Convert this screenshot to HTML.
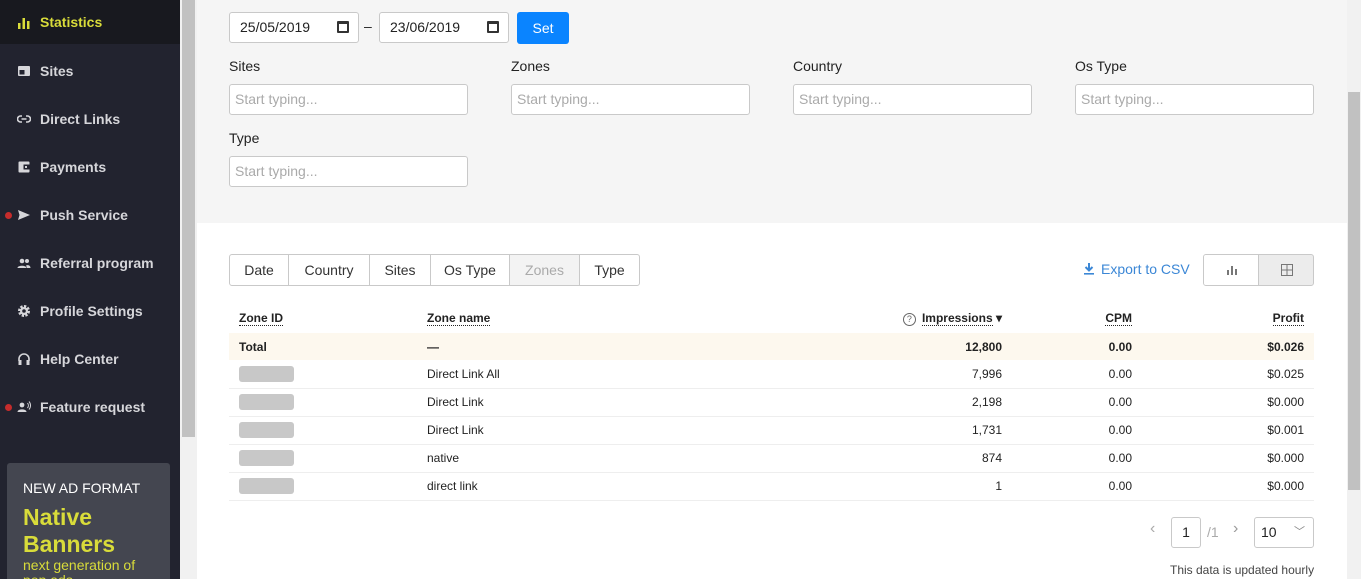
<!DOCTYPE html>
<html style="overflow:hidden;width:1361px;height:579px"><head><meta charset="utf-8"><style>
*{box-sizing:border-box;margin:0;padding:0}
body{width:1361px;height:579px;overflow:hidden;font-family:"Liberation Sans",Arial,sans-serif;background:#fff;position:relative;color:#222}
.sb{position:absolute;left:0;top:0;width:180px;height:579px;background:#22232f;overflow:hidden}
.it{position:absolute;left:0;width:180px;height:48px;color:#d6d6da;font-size:14px;font-weight:bold;line-height:48px;padding-left:40px}
.it.act{background:#18191f;color:#d9dc3a;height:44px;line-height:44px}
.ic{position:absolute;left:17px;top:17px;width:14px;height:14px}
.dot{position:absolute;left:5px;top:21px;width:7px;height:7px;border-radius:50%;background:#c62c2c}
.promo{position:absolute;left:7px;top:463px;width:163px;height:130px;background:#444650;border-radius:3px;padding:17px 16px}
.vs1{position:absolute;left:180px;top:0;width:17px;height:579px;background:#f1f1f1}
.vs1 i{position:absolute;left:2px;top:0;width:13px;height:437px;background:#c1c1c1}
.vs2{position:absolute;left:1347px;top:0;width:14px;height:579px;background:#f1f1f1}
.vs2 i{position:absolute;left:1px;top:92px;width:12px;height:398px;background:#c1c1c1}
.top{position:absolute;left:197px;top:0;width:1150px;height:223px;background:#f5f5f5}
.inp{position:absolute;height:31px;background:#fff;border:1px solid #c9c9c9;border-radius:3px;font-size:14px;line-height:29px;padding-left:5px;color:#aaa}
.lbl{position:absolute;font-size:14px;color:#222}
.date{color:#222;padding-left:10px}
.cal{position:absolute;right:9px;top:8px;width:12px;height:12px;border:2px solid #333;border-top-width:3px;border-radius:1px}
.set{position:absolute;left:517px;top:12px;width:52px;height:32px;background:#0a84ff;border-radius:3px;color:#fff;font-size:14px;text-align:center;line-height:32px}
.tabs{position:absolute;left:229px;top:254px;height:32px;display:flex;border:1px solid #c9c9c9;border-radius:3px;font-size:14px}
.tabs div{text-align:center;line-height:30px;border-right:1px solid #c9c9c9;color:#333}
.tabs div:last-child{border-right:0}
.tabs .dis{background:#f3f3f3;color:#aaa}
table{position:absolute;left:229px;top:303px;width:1085px;border-collapse:collapse;font-size:12px}
td,th{height:28px;padding:0 10px;text-align:left}
th{font-weight:bold;height:30px}
th span{border-bottom:1px dotted #222}
tr.d td{border-bottom:1px solid #eee}
tr.t td{background:#fdf8ee;font-weight:bold;height:27px}
.r{text-align:right}
.blur{display:inline-block;width:55px;height:16px;background:#c8c8c8;border-radius:3px;vertical-align:middle}
</style></head><body>
<div class="sb">
 <div class="it act" style="top:0"><svg class="ic" style="top:16px" viewBox="0 0 14 14"><rect x="1" y="7" width="2.5" height="6" fill="#d9dc3a"/><rect x="5.5" y="2" width="2.5" height="11" fill="#d9dc3a"/><rect x="10" y="5" width="2.5" height="8" fill="#d9dc3a"/></svg>Statistics</div>
 <div class="it" style="top:47px"><svg class="ic" viewBox="0 0 14 14"><rect x="1" y="2" width="12" height="10" rx="1" fill="#d6d6da"/><rect x="2.5" y="6" width="5" height="4.5" fill="#22232f"/></svg>Sites</div>
 <div class="it" style="top:95px"><svg class="ic" viewBox="0 0 14 14"><path d="M5 4H3.5a3 3 0 0 0 0 6H5M9 4h1.5a3 3 0 0 1 0 6H9M4.5 7h5" stroke="#d6d6da" stroke-width="1.6" fill="none"/></svg>Direct Links</div>
 <div class="it" style="top:143px"><svg class="ic" viewBox="0 0 14 14"><rect x="1.5" y="1.5" width="11" height="11" rx="1" fill="#d6d6da"/><rect x="6.5" y="4.5" width="6" height="5" fill="#22232f"/><rect x="8" y="6" width="2" height="2" fill="#d6d6da"/></svg>Payments</div>
 <div class="dot" style="top:212px"></div><div class="it" style="top:191px"><svg class="ic" viewBox="0 0 14 14"><path d="M1 2l12 5-12 5 1.5-5z" fill="#d6d6da"/></svg>Push Service</div>
 <div class="it" style="top:239px"><svg class="ic" viewBox="0 0 14 14"><circle cx="5" cy="5" r="2.3" fill="#d6d6da"/><circle cx="10" cy="5" r="2" fill="#d6d6da"/><path d="M0.5 12c0-3 9-3 9 0zM9 9.5c2-1 4.5 0 4.5 2.5H10z" fill="#d6d6da"/></svg>Referral program</div>
 <div class="it" style="top:287px"><svg class="ic" viewBox="0 0 14 14"><circle cx="7" cy="7" r="4.5" fill="none" stroke="#d6d6da" stroke-width="3" stroke-dasharray="2.2 1.3"/><circle cx="7" cy="7" r="4" fill="#d6d6da"/><circle cx="7" cy="7" r="1.8" fill="#22232f"/></svg>Profile Settings</div>
 <div class="it" style="top:335px"><svg class="ic" viewBox="0 0 14 14"><path d="M2 9V7a5 5 0 0 1 10 0v2" stroke="#d6d6da" stroke-width="1.6" fill="none"/><rect x="1.5" y="8" width="3" height="5" fill="#d6d6da"/><rect x="9.5" y="8" width="3" height="5" fill="#d6d6da"/></svg>Help Center</div>
 <div class="dot" style="top:404px"></div><div class="it" style="top:383px"><svg class="ic" viewBox="0 0 14 14"><circle cx="5" cy="5" r="2.4" fill="#d6d6da"/><path d="M0.5 12c0-3.5 9-3.5 9 0z" fill="#d6d6da"/><path d="M10.5 3a4 4 0 0 1 0 5M12 1.5a6 6 0 0 1 0 8" stroke="#d6d6da" stroke-width="1" fill="none"/></svg>Feature request</div>
 <div class="promo"><div style="color:#fff;font-size:14px">NEW AD FORMAT</div><div style="color:#d9dc3a;font-weight:bold;font-size:23px;line-height:27px;margin-top:8px">Native<br>Banners</div><div style="color:#d9dc3a;font-size:14px;line-height:15px">next generation of<br>pop ads</div></div>
</div>
<div class="vs1"><i></i></div>
<div class="top"></div>
<div class="inp date" style="left:229px;top:12px;width:130px">25/05/2019<div class="cal"></div></div>
<div style="position:absolute;left:364px;top:18px;font-size:14px">–</div>
<div class="inp date" style="left:379px;top:12px;width:130px">23/06/2019<div class="cal"></div></div>
<div class="set">Set</div>
<div class="lbl" style="left:229px;top:58px">Sites</div>
<div class="lbl" style="left:511px;top:58px">Zones</div>
<div class="lbl" style="left:793px;top:58px">Country</div>
<div class="lbl" style="left:1075px;top:58px">Os Type</div>
<div class="inp" style="left:229px;top:84px;width:239px">Start typing...</div>
<div class="inp" style="left:511px;top:84px;width:239px">Start typing...</div>
<div class="inp" style="left:793px;top:84px;width:239px">Start typing...</div>
<div class="inp" style="left:1075px;top:84px;width:239px">Start typing...</div>
<div class="lbl" style="left:229px;top:130px">Type</div>
<div class="inp" style="left:229px;top:156px;width:239px">Start typing...</div>
<div class="tabs"><div style="width:59px">Date</div><div style="width:81px">Country</div><div style="width:61px">Sites</div><div style="width:79px">Os Type</div><div class="dis" style="width:70px">Zones</div><div style="width:59px">Type</div></div>
<div style="position:absolute;left:1083px;top:261px;font-size:14px;color:#3b87d6"><svg width="12" height="13" viewBox="0 0 12 13" style="vertical-align:-1px;margin-right:6px"><path d="M6 1v7M2.5 5l3.5 3.5L9.5 5" stroke="#3b87d6" stroke-width="2" fill="none"/><rect x="1" y="11" width="10" height="1.6" fill="#3b87d6"/></svg>Export to CSV</div>
<div style="position:absolute;left:1203px;top:254px;width:111px;height:32px;border:1px solid #c9c9c9;border-radius:3px;background:#ececec;overflow:hidden"><div style="width:55px;height:30px;background:#fff;border-right:1px solid #c9c9c9"></div>
<svg style="position:absolute;left:22px;top:9px" width="12" height="12" viewBox="0 0 12 12"><rect x="1" y="6" width="2" height="5" fill="#777"/><rect x="5" y="2" width="2" height="9" fill="#777"/><rect x="9" y="5" width="2" height="6" fill="#777"/></svg>
<svg style="position:absolute;left:77px;top:9px" width="12" height="12" viewBox="0 0 12 12"><rect x="0.5" y="0.5" width="11" height="11" fill="none" stroke="#777"/><path d="M6 0v12M0 6h12" stroke="#777"/></svg></div>
<table>
<tr><th><span>Zone ID</span></th><th><span>Zone name</span></th><th class="r"><span style="border:0;margin-right:6px;display:inline-block;width:13px;height:13px;border:1px solid #666;border-radius:50%;font-size:9px;text-align:center;line-height:11px;font-weight:normal;color:#666">?</span><span>Impressions</span> ▾</th><th class="r"><span>CPM</span></th><th class="r"><span>Profit</span></th></tr>
<tr class="t"><td style="width:188px">Total</td><td>—</td><td class="r">12,800</td><td class="r" style="width:130px">0.00</td><td class="r" style="width:172px">$0.026</td></tr>
<tr class="d"><td><span class="blur"></span></td><td>Direct Link All</td><td class="r">7,996</td><td class="r">0.00</td><td class="r">$0.025</td></tr>
<tr class="d"><td><span class="blur"></span></td><td>Direct Link</td><td class="r">2,198</td><td class="r">0.00</td><td class="r">$0.000</td></tr>
<tr class="d"><td><span class="blur"></span></td><td>Direct Link</td><td class="r">1,731</td><td class="r">0.00</td><td class="r">$0.001</td></tr>
<tr class="d"><td><span class="blur"></span></td><td>native</td><td class="r">874</td><td class="r">0.00</td><td class="r">$0.000</td></tr>
<tr class="d"><td><span class="blur"></span></td><td>direct link</td><td class="r">1</td><td class="r">0.00</td><td class="r">$0.000</td></tr>
</table>
<div style="position:absolute;left:1150px;top:520px;font-size:16px;color:#aaa">‹</div>
<div style="position:absolute;left:1171px;top:517px;width:30px;height:31px;border:1px solid #c9c9c9;border-radius:3px;text-align:center;line-height:29px;font-size:14px">1</div>
<div style="position:absolute;left:1207px;top:524px;font-size:14px;color:#aaa">/1</div>
<div style="position:absolute;left:1233px;top:520px;font-size:16px;color:#999">›</div>
<div style="position:absolute;left:1254px;top:517px;width:60px;height:31px;border:1px solid #c9c9c9;border-radius:3px;font-size:14px;line-height:29px;padding-left:6px">10<span style="position:absolute;right:8px;top:0;color:#888;font-size:11px">﹀</span></div>
<div style="position:absolute;left:1170px;top:563px;font-size:12px;color:#444">This data is updated hourly</div>
<div class="vs2"><i></i></div>
</body></html>
